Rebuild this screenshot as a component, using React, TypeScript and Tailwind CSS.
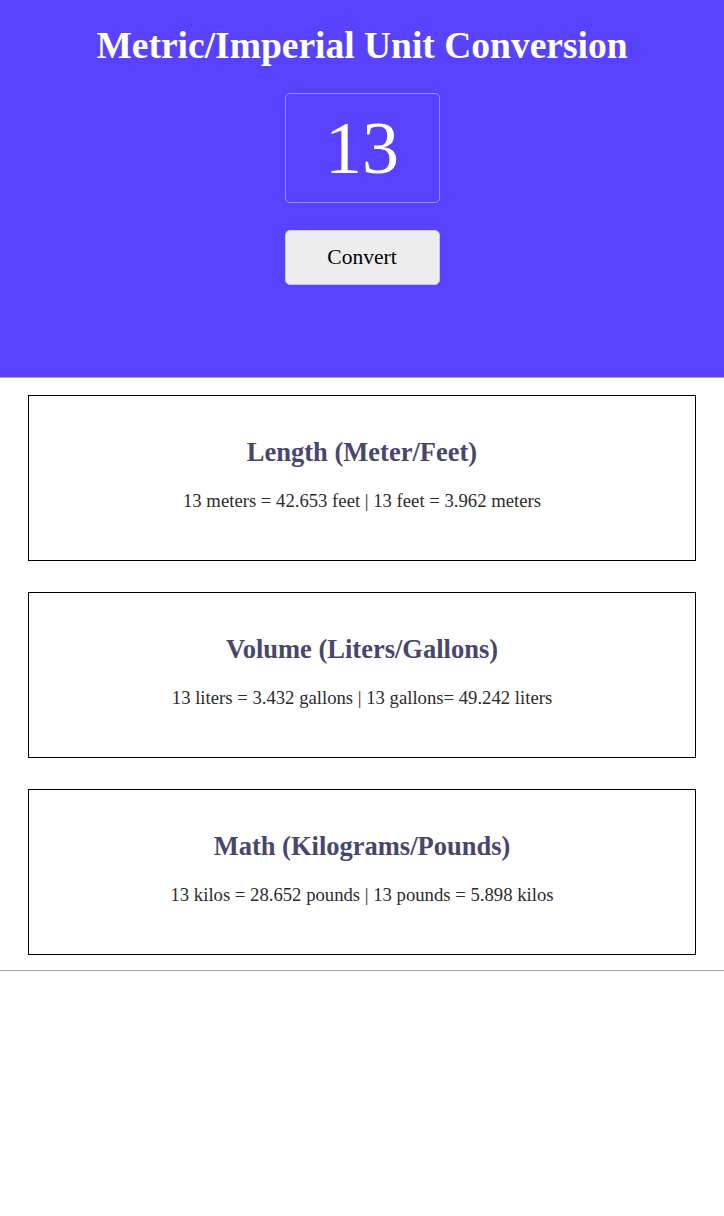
import React from "react";

const results = [
  { title: "Length (Meter/Feet)", text: "13 meters = 42.653 feet | 13 feet = 3.962 meters" },
  { title: "Volume (Liters/Gallons)", text: "13 liters = 3.432 gallons | 13 gallons= 49.242 liters" },
  { title: "Math (Kilograms/Pounds)", text: "13 kilos = 28.652 pounds | 13 pounds = 5.898 kilos" },
];

const App = () => {
  return (
    <div className="min-h-[1216px] w-full bg-white font-['Liberation_Serif',serif]">
      {/* header */}
      <header className="flex h-[378px] flex-col items-center border-b border-[#a99cf0] bg-[#5842fe] pt-[22px]">
        <h1 className="text-[37.5px] font-bold leading-[48px] text-white">Metric/Imperial Unit Conversion</h1>
        <div className="mt-[23px] flex h-[110px] w-[155px] items-center justify-center rounded-[5px] border border-[#9a8ffb]">
          <span className="text-[74px] leading-none text-white">13</span>
        </div>
        <button className="mt-[27px] h-[55px] w-[155px] rounded-[5px] border border-[#c9c6e6] bg-[#ededed] text-[21.5px] text-black">
          Convert
        </button>
      </header>

      {/* results */}
      <main className="flex flex-col gap-[31px] border-b border-[#a9a3c4] px-[28px] pt-[17px] pb-[15px]">
        {results.map((r) => (
          <section
            key={r.title}
            className="flex h-[166px] flex-col items-center border border-black pt-[40px]"
          >
            <h2 className="text-[26.5px] font-bold leading-[32px] text-[#48466d]">{r.title}</h2>
            <p className="mt-[22px] text-[18.7px] leading-[22px] text-[#2b2b2b]">{r.text}</p>
          </section>
        ))}
      </main>
    </div>
  );
};

export default App;
